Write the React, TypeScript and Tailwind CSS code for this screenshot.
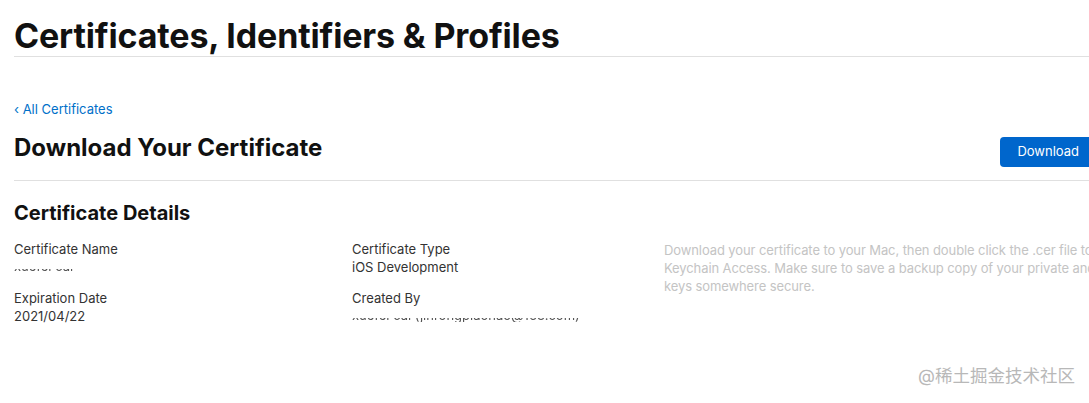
import React from 'react'

function Blurred({ text }: { text: string }) {
  // sensitive value, only the bottom slice of the glyphs shows
  return (
    <div className="h-[18px] flex flex-col justify-end pb-[3px]">
      <div className="h-[4px] overflow-hidden flex flex-col justify-end">
        <span className="leading-[13px] text-[13px] text-[#555] blur-[0.4px] whitespace-nowrap">{text}</span>
      </div>
    </div>
  )
}

function Field({ label, value, hidden }: { label: string; value: string; hidden?: boolean }) {
  return (
    <div>
      <p className="text-[13px] leading-[18px] text-[#333]">{label}</p>
      {hidden ? (
        <Blurred text={value} />
      ) : (
        <p className="text-[13px] leading-[18px] text-[#333]">{value}</p>
      )}
    </div>
  )
}

export default function App() {
  return (
    <div
      className="w-[1089px] h-[403px] overflow-hidden relative bg-white"
      style={{ fontFamily: 'Inter, "Noto Sans CJK SC", sans-serif' }}
    >
      <div className="w-[1200px] pl-[14px]">
        <div className="pt-[16px] border-b border-[#e0e0e0] mr-[60px]">
          <h1 className="text-[34px] leading-[40px] font-bold tracking-[-0.15px] text-[#111]">
            Certificates, Identifiers &amp; Profiles
          </h1>
        </div>

        <a className="block mt-[43px] text-[13px] leading-[18px] text-[#0070c9]">‹ All Certificates</a>

        <div className="flex items-start justify-between mt-[15px] pb-[13px] border-b border-[#e0e0e0] mr-[60px]">
          <h2 className="text-[24px] leading-[30px] font-bold text-[#111]">Download Your Certificate</h2>
          <button className="mt-[4px] mr-[44px] h-[30px] px-[17px] rounded-[4px] bg-[#0066cc] text-white text-[13px]">
            Download
          </button>
        </div>

        <h3 className="mt-[20px] text-[20px] leading-[24px] font-bold text-[#111]">Certificate Details</h3>

        <div className="grid grid-cols-[338px_312px_1fr] mt-[15px]">
          <div className="flex flex-col gap-[13px]">
            <Field label="Certificate Name" value="xuefei cai" hidden />
            <Field label="Expiration Date" value="2021/04/22" />
          </div>
          <div className="flex flex-col gap-[13px]">
            <Field label="Certificate Type" value="iOS Development" />
            <Field label="Created By" value="xuefei cai (jinrongpiaohao@163.com)" hidden />
          </div>
          <p className="pt-[1px] text-[13px] leading-[18px] tracking-[-0.1px] text-[#c4c4c4] w-[500px]">
            Download your certificate to your Mac, then double click the .cer file to install in Keychain Access.
            Make sure to save a backup copy of your private and public keys somewhere secure.
          </p>
        </div>
      </div>

      <div className="absolute right-[14px] bottom-[14px] text-[17.5px] text-[#b8b8b8]">@稀土掘金技术社区</div>
    </div>
  )
}
